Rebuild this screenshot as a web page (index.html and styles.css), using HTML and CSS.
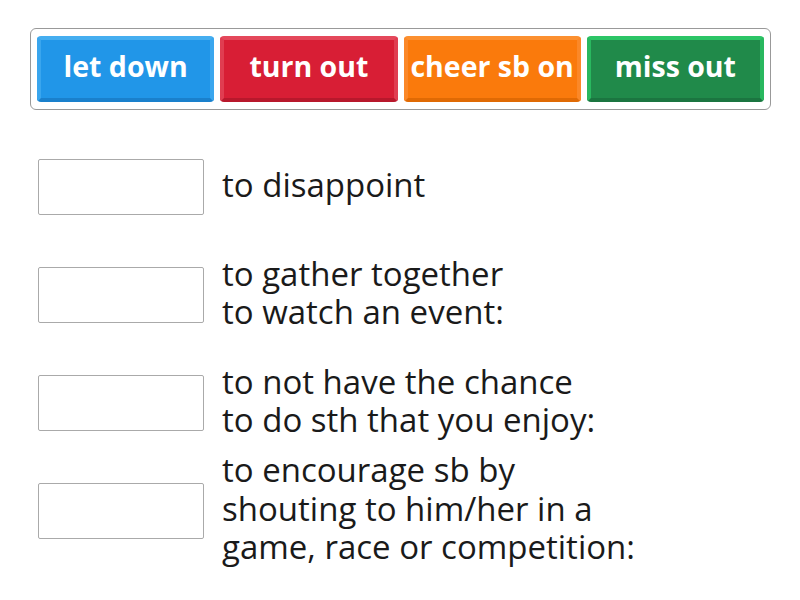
FILE: index.html
```html
<!DOCTYPE html>
<html lang="en">

<head>
  <meta charset="utf-8">
  <title>Match up</title>
  <link rel="stylesheet" href="styles.css">
</head>

<body>
  <div class="bank">
    <div class="tile blue">let down</div>
    <div class="tile red">turn out</div>
    <div class="tile orange">cheer sb on</div>
    <div class="tile green">miss out</div>
  </div>

  <ul class="rows">
    <li>
      <div class="slot"></div>
      <div class="def">to disappoint</div>
    </li>
    <li>
      <div class="slot"></div>
      <div class="def">to gather together<br>to watch an event:</div>
    </li>
    <li>
      <div class="slot"></div>
      <div class="def">to not have the chance<br>to do sth that you enjoy:</div>
    </li>
    <li>
      <div class="slot"></div>
      <div class="def">to encourage sb by<br>shouting to him/her in a<br>game, race or competition:</div>
    </li>
  </ul>
</body>

</html>
```

FILE: styles.css
```css
body, div, ul, li {
  margin: 0;
  padding: 0;
}

ul {
  list-style: none;
}

body {
  background: #fff;
  font-family: "Open Sans", sans-serif;
  color: #1a1a1a;
  padding: 28px 30px 40px;
}

.bank {
  width: 727px;
  border: 1px solid #999;
  border-radius: 6px;
  padding: 7px 6px 7px 6px;
  display: flex;
  gap: 6px;
}

.tile {
  flex: 1;
  height: 58px;
  border: 4px solid;
  border-radius: 4px;
  color: #fff;
  font-weight: bold;
  font-size: 28.5px;
  line-height: 52px;
  text-align: center;
  white-space: nowrap;
}

.blue {
  background: #2196e8;
  border-color: #45aef0 #3aa6ee #1a80cc;
}

.red {
  background: #d81e35;
  border-color: #e4485b #e03d51 #b8182c;
}

.orange {
  background: #fa7a0c;
  border-color: #fc9030 #fb8828 #e06a04;
}

.green {
  background: #208a4a;
  border-color: #2cc566 #29b85f #1b7540;
}

.rows {
  margin-top: 23px;
}

.rows li {
  height: 108px;
  display: flex;
  align-items: center;
  gap: 18px;
}

.slot {
  width: 164px;
  height: 54px;
  margin-left: 8px;
  border: 1px solid #aaa;
  border-radius: 2px;
  flex-shrink: 0;
}

.def {
  font-size: 33px;
  line-height: 38.5px;
  margin-bottom: 4px;
  white-space: nowrap;
}
```
